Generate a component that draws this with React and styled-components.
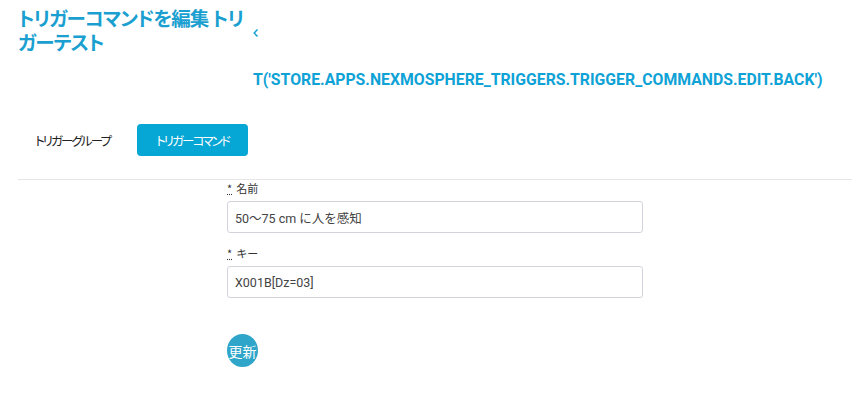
import React from 'react';
import styled, { createGlobalStyle } from 'styled-components';

const GlobalStyle = createGlobalStyle`
  body {
    margin: 0;
    background: #fff;
    font-family: "Noto Sans CJK JP", "Noto Sans", sans-serif;
    color: #333;
  }
`;

const Page = styled.div`
  padding: 0 13px 0 18px;
`;

const Header = styled.div`
  display: flex;
  align-items: flex-start;
  padding-top: 6px;
`;

const Title = styled.h1`
  margin: 0;
  width: 235px;
  font-size: 19.5px;
  line-height: 24px;
  font-weight: 700;
  color: #1a9fd0;
  font-feature-settings: "palt";
  letter-spacing: -0.9px;
`;

const Back = styled.div`
  display: flex;
  flex-direction: column;
  padding-top: 14px;
  color: #1aa3d6;
`;

const Chevron = styled.span`
  display: block;
  height: 12px;
`;

const BackText = styled.a`
  margin-top: 38px;
  font-family: Roboto, "Liberation Sans", sans-serif;
  font-weight: 700;
  font-size: 15.8px;
  white-space: nowrap;
  color: #0ea2d6;
`;

const Tabs = styled.div`
  display: flex;
  align-items: center;
  gap: 27px;
  margin-top: 35px;
  padding-left: 17px;
`;

const Tab = styled.button`
  height: 32px;
  padding: 0 ${p => (p.$active ? '19px' : '0')};
  border: none;
  border-radius: 4px;
  background: ${p => (p.$active ? '#06a6d5' : 'transparent')};
  color: ${p => (p.$active ? '#fff' : '#222')};
  font-family: "Noto Sans CJK JP", sans-serif;
  font-size: 12.5px;
  letter-spacing: -1.9px;
  font-feature-settings: "palt";
  cursor: pointer;
`;

const Divider = styled.hr`
  margin: 23px 0 0;
  border: none;
  border-top: 1px solid #e6e6e6;
`;

const Form = styled.form`
  margin-left: 209px;
  width: 416px;
  padding-top: 1px;
`;

const Field = styled.div`
  margin-bottom: 13px;
`;

const Label = styled.label`
  display: block;
  font-size: 11px;
  line-height: 14px;
  color: #333;
  margin-bottom: 6px;
  abbr {
    text-decoration: underline dotted;
    margin-right: 4px;
  }
`;

const Input = styled.input`
  box-sizing: border-box;
  width: 100%;
  height: 32px;
  padding: 0 7px;
  border: 1px solid #d3d3de;
  border-radius: 3px;
  font-family: Roboto, "Noto Sans CJK JP", sans-serif;
  font-size: 12.5px;
  color: #444;
  outline: none;
`;

const Submit = styled.button`
  width: 31px;
  height: 33px;
  margin-top: 36px;
  padding: 0;
  border: none;
  border-radius: 50%;
  background: #2fa6c9;
  color: #fff;
  font-family: "Noto Sans CJK JP", sans-serif;
  font-size: 14px;
  white-space: nowrap;
  display: flex;
  align-items: center;
  justify-content: center;
  cursor: pointer;
`;

export default function App() {
  return (
    <Page>
      <GlobalStyle />
      <Header>
        <Title>トリガーコマンドを編集 トリガーテスト</Title>
        <Back>
          <Chevron>
            <svg width="8" height="12" viewBox="0 0 8 12">
              <path d="M4.5 2.5 L1.2 6 L4.5 9.5" fill="none" stroke="#1aa3d6" strokeWidth="1.5" />
            </svg>
          </Chevron>
          <BackText>T('STORE.APPS.NEXMOSPHERE_TRIGGERS.TRIGGER_COMMANDS.EDIT.BACK')</BackText>
        </Back>
      </Header>
      <Tabs>
        <Tab type="button">トリガーグループ</Tab>
        <Tab type="button" $active>トリガーコマンド</Tab>
      </Tabs>
      <Divider />
      <Form onSubmit={e => e.preventDefault()}>
        <Field>
          <Label><abbr title="required">*</abbr>名前</Label>
          <Input defaultValue="50〜75 cm に人を感知" />
        </Field>
        <Field>
          <Label><abbr title="required">*</abbr>キー</Label>
          <Input defaultValue="X001B[Dz=03]" />
        </Field>
        <Submit type="submit">更新</Submit>
      </Form>
    </Page>
  );
}
